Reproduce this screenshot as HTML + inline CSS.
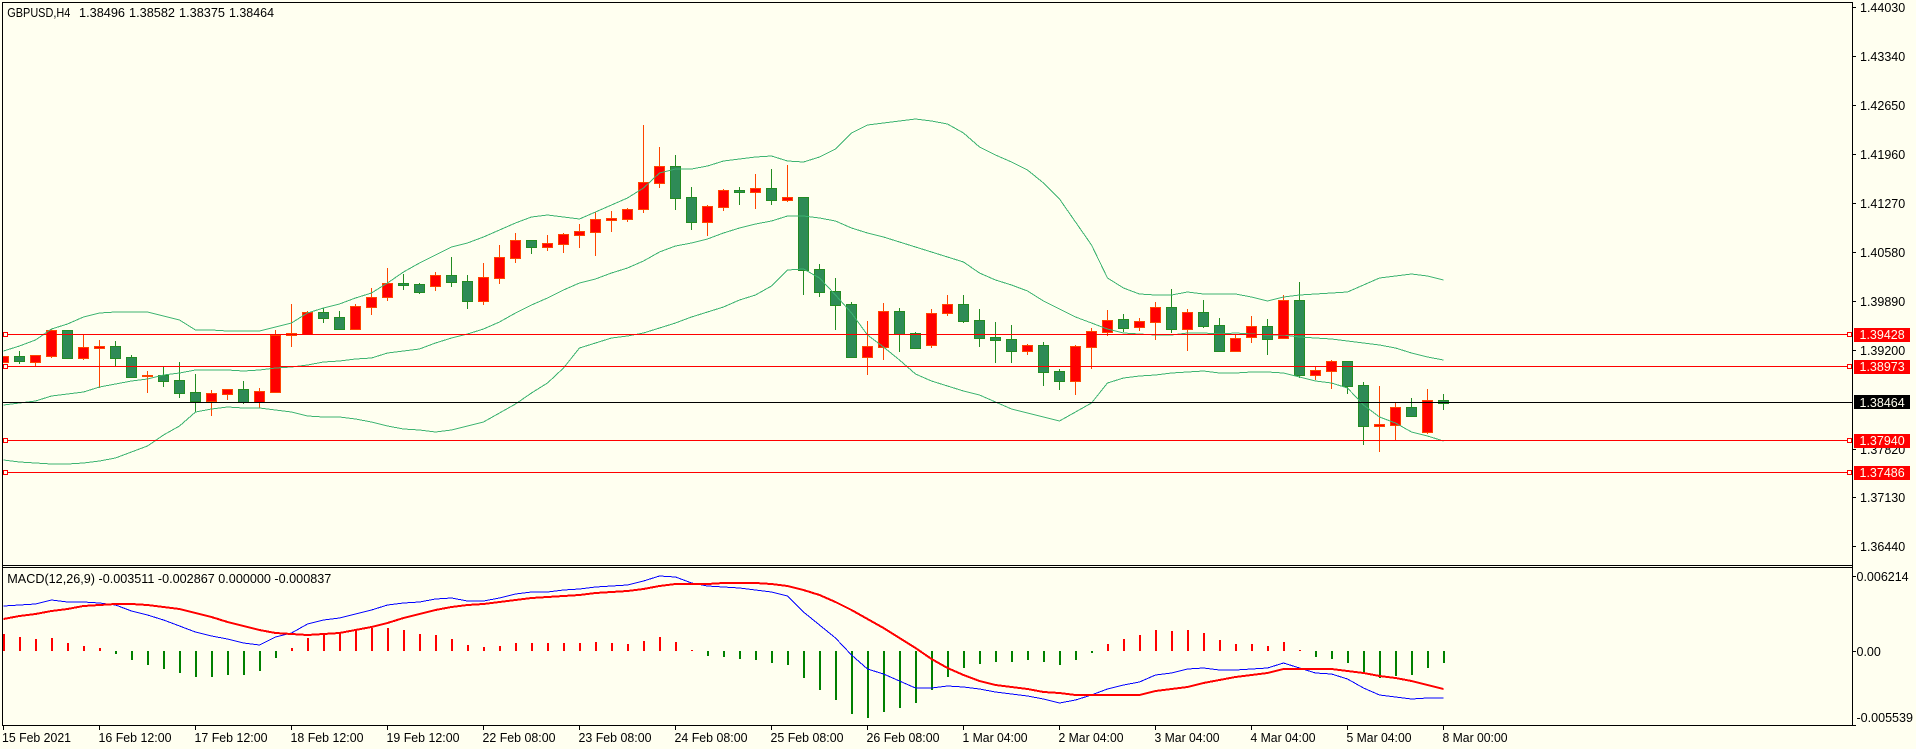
<!DOCTYPE html>
<html><head><meta charset="utf-8"><title>GBPUSD,H4</title>
<style>
html,body{margin:0;padding:0;background:#FFFFF0;width:1916px;height:749px;overflow:hidden}
svg{display:block}
text{font-family:"Liberation Sans",sans-serif;font-size:12.5px;fill:#000}
.c{shape-rendering:crispEdges}
.w{fill:#FFFFF0}
</style></head><body>
<svg width="1916" height="749" viewBox="0 0 1916 749" xmlns="http://www.w3.org/2000/svg">
<rect width="1916" height="749" fill="#FFFFF0"/>
<g class="c" fill="none">
<path stroke="#FF4500" d="M35.5 355V366M51.5 329V358M83.5 334V360M99.5 340V388M147.5 371V393M211.5 390V416M227.5 389V400M259.5 388V408M275.5 330V393M291.5 304V347M307.5 311V334M355.5 304V329M371.5 288V315M387.5 268V301M435.5 272V291M483.5 263V305M499.5 245V284M515.5 233V263M547.5 235V251M563.5 233V253M579.5 224V248M595.5 212V256M611.5 211V232M627.5 208V222M643.5 125V213M659.5 147V188M707.5 205V236M723.5 189V211M755.5 174V209M787.5 165V202M867.5 321V375M883.5 303V360M931.5 309V348M947.5 295V316M1027.5 344V355M1075.5 345V395M1091.5 328V369M1107.5 310V336M1139.5 318V331M1155.5 302V340M1187.5 309V351M1235.5 335V351M1251.5 316V343M1283.5 295V338M1315.5 367V380M1331.5 360V389M1379.5 386V452M1395.5 403V440M1427.5 389V434"/>
<path stroke="#228B22" d="M19.5 351V364M115.5 341V366M131.5 355V377M163.5 367V387M179.5 362V398M195.5 374V412M243.5 381V404M323.5 308V323M339.5 311V329M403.5 274V290M419.5 283V294M451.5 257V287M467.5 275V309M531.5 240V254M675.5 155V210M691.5 187V230M739.5 187V205M771.5 169V205M803.5 197V295M819.5 264V297M835.5 278V330M851.5 302V358M899.5 308V352M915.5 332V349M963.5 295V323M979.5 309V347M995.5 322V363M1011.5 325V363M1043.5 342V386M1059.5 369V390M1123.5 314V332M1171.5 289V333M1203.5 300V328M1219.5 318V351M1267.5 319V355M1299.5 282V378M1347.5 361V394M1363.5 382V445M1411.5 398V417M1443.5 394V410"/>
<path stroke="#FF4500" fill="#FF0000" d="M-1.5 356.5h10v6h-10zM30.5 355.5h10v7h-10zM46.5 330.5h10v26h-10zM78.5 347.5h10v11h-10zM94.5 346.5h10v2h-10zM142.5 375.5h10v1h-10zM206.5 393.5h10v8h-10zM222.5 389.5h10v5h-10zM254.5 391.5h10v11h-10zM270.5 335.5h10v57h-10zM286.5 333.5h10v2h-10zM302.5 312.5h10v22h-10zM350.5 306.5h10v23h-10zM366.5 297.5h10v10h-10zM382.5 283.5h10v14h-10zM430.5 275.5h10v11h-10zM478.5 277.5h10v24h-10zM494.5 257.5h10v21h-10zM510.5 240.5h10v18h-10zM542.5 243.5h10v4h-10zM558.5 234.5h10v10h-10zM574.5 231.5h10v4h-10zM590.5 219.5h10v13h-10zM606.5 218.5h10v2h-10zM622.5 209.5h10v10h-10zM638.5 182.5h10v27h-10zM654.5 166.5h10v17h-10zM702.5 206.5h10v16h-10zM718.5 190.5h10v17h-10zM750.5 188.5h10v4h-10zM782.5 197.5h10v3h-10zM862.5 346.5h10v11h-10zM878.5 311.5h10v36h-10zM926.5 313.5h10v32h-10zM942.5 304.5h10v9h-10zM1022.5 345.5h10v6h-10zM1070.5 346.5h10v35h-10zM1086.5 331.5h10v16h-10zM1102.5 320.5h10v12h-10zM1134.5 321.5h10v6h-10zM1150.5 307.5h10v15h-10zM1182.5 312.5h10v17h-10zM1230.5 338.5h10v13h-10zM1246.5 326.5h10v11h-10zM1278.5 300.5h10v38h-10zM1310.5 370.5h10v5h-10zM1326.5 361.5h10v10h-10zM1374.5 424.5h10v2h-10zM1390.5 407.5h10v18h-10zM1422.5 400.5h10v32h-10z"/>
<path stroke="#228B22" fill="#2E8B57" d="M14.5 356.5h10v5h-10zM62.5 330.5h10v28h-10zM110.5 346.5h10v12h-10zM126.5 357.5h10v20h-10zM158.5 375.5h10v6h-10zM174.5 380.5h10v13h-10zM190.5 392.5h10v9h-10zM238.5 389.5h10v13h-10zM318.5 312.5h10v6h-10zM334.5 317.5h10v12h-10zM398.5 283.5h10v2h-10zM414.5 284.5h10v8h-10zM446.5 275.5h10v7h-10zM462.5 281.5h10v20h-10zM526.5 240.5h10v7h-10zM670.5 166.5h10v32h-10zM686.5 197.5h10v25h-10zM734.5 190.5h10v2h-10zM766.5 188.5h10v12h-10zM798.5 197.5h10v73h-10zM814.5 269.5h10v23h-10zM830.5 291.5h10v14h-10zM846.5 304.5h10v53h-10zM894.5 311.5h10v23h-10zM910.5 333.5h10v15h-10zM958.5 304.5h10v17h-10zM974.5 320.5h10v18h-10zM990.5 337.5h10v3h-10zM1006.5 339.5h10v12h-10zM1038.5 345.5h10v27h-10zM1054.5 371.5h10v10h-10zM1118.5 319.5h10v9h-10zM1166.5 307.5h10v22h-10zM1198.5 312.5h10v14h-10zM1214.5 325.5h10v26h-10zM1262.5 326.5h10v13h-10zM1294.5 300.5h10v75h-10zM1342.5 361.5h10v25h-10zM1358.5 385.5h10v41h-10zM1406.5 407.5h10v9h-10zM1438.5 400.5h10v3h-10z"/>
</g>
<rect x="0" y="0" width="2" height="749" fill="#FFFFF0"/>
<g fill="none" stroke="#3CB371" stroke-width="1" shape-rendering="crispEdges">
<polyline points="3.5,351 19.5,346 35.5,340 51.5,329 67.5,324 83.5,317 99.5,313 115.5,312 131.5,312 147.5,312 163.5,316 179.5,320 195.5,330 211.5,330 227.5,331 243.5,331 259.5,331 275.5,327 291.5,323 307.5,313 323.5,308 339.5,304 355.5,298 371.5,293 387.5,283 403.5,272 419.5,263 435.5,255 451.5,247 467.5,243 483.5,237 499.5,230 515.5,223 531.5,217 547.5,215 563.5,217 579.5,219 595.5,212 611.5,205 627.5,198 643.5,188 659.5,173 675.5,169 691.5,169 707.5,166 723.5,161 739.5,159 755.5,157 771.5,156 787.5,161 803.5,162 819.5,157 835.5,149 851.5,133 867.5,125 883.5,123 899.5,121 915.5,119 931.5,121 947.5,124 963.5,133 979.5,147 995.5,155 1011.5,162 1027.5,170 1043.5,183 1059.5,199 1075.5,222 1091.5,245 1107.5,278 1123.5,288 1139.5,294 1155.5,295 1171.5,295 1187.5,292 1203.5,294 1219.5,294 1235.5,294 1251.5,297 1267.5,301 1283.5,297 1299.5,295 1315.5,294 1331.5,293 1347.5,292 1363.5,285 1379.5,278 1395.5,276 1411.5,274 1427.5,276 1443.5,280"/>
<polyline points="3.5,405 19.5,403 35.5,401 51.5,396 67.5,394 83.5,392 99.5,387 115.5,384 131.5,381 147.5,379 163.5,375 179.5,373 195.5,370 211.5,370 227.5,370 243.5,371 259.5,370 275.5,368 291.5,367 307.5,365 323.5,362 339.5,361 355.5,359 371.5,358 387.5,353 403.5,351 419.5,349 435.5,343 451.5,338 467.5,334 483.5,329 499.5,322 515.5,313 531.5,305 547.5,298 563.5,290 579.5,283 595.5,279 611.5,273 627.5,268 643.5,261 659.5,252 675.5,246 691.5,243 707.5,239 723.5,233 739.5,228 755.5,224 771.5,221 787.5,216 803.5,216 819.5,218 835.5,221 851.5,228 867.5,233 883.5,237 899.5,242 915.5,247 931.5,252 947.5,257 963.5,262 979.5,273 995.5,280 1011.5,285 1027.5,291 1043.5,301 1059.5,309 1075.5,317 1091.5,323 1107.5,329 1123.5,333 1139.5,334 1155.5,335 1171.5,335 1187.5,333 1203.5,333 1219.5,334 1235.5,333 1251.5,334 1267.5,335 1283.5,335 1299.5,337 1315.5,338 1331.5,339 1347.5,341 1363.5,343 1379.5,345 1395.5,348 1411.5,353 1427.5,357 1443.5,360"/>
<polyline points="3.5,460 19.5,462 35.5,463 51.5,464 67.5,464 83.5,463 99.5,461 115.5,458 131.5,452 147.5,446 163.5,435 179.5,426 195.5,412 211.5,409 227.5,407 243.5,408 259.5,408 275.5,410 291.5,412 307.5,416 323.5,417 339.5,417 355.5,419 371.5,422 387.5,426 403.5,429 419.5,430 435.5,432 451.5,430 467.5,426 483.5,422 499.5,413 515.5,404 531.5,393 547.5,383 563.5,368 579.5,348 595.5,343 611.5,338 627.5,336 643.5,333 659.5,328 675.5,323 691.5,317 707.5,312 723.5,307 739.5,300 755.5,295 771.5,286 787.5,270 803.5,269 819.5,278 835.5,295 851.5,313 867.5,335 883.5,347 899.5,360 915.5,374 931.5,381 947.5,386 963.5,391 979.5,395 995.5,402 1011.5,409 1027.5,413 1043.5,417 1059.5,421 1075.5,412 1091.5,403 1107.5,383 1123.5,378 1139.5,376 1155.5,375 1171.5,373 1187.5,372 1203.5,371 1219.5,373 1235.5,373 1251.5,372 1267.5,372 1283.5,373 1299.5,377 1315.5,381 1331.5,383 1347.5,388 1363.5,405 1379.5,417 1395.5,423 1411.5,432 1427.5,436 1443.5,441"/>
</g>
<g class="c">
<g fill="none" stroke="#000"><path d="M3 402.5H1852"/></g>
<path fill="none" stroke="#FF0000" d="M3 334.5H1852M3 366.5H1852M3 440.5H1852M3 472.5H1852"/>
<path fill="#FFFFF0" stroke="#FF0000" d="M3.5 332.5h4v4h-4zM3.5 364.5h4v4h-4zM3.5 438.5h4v4h-4zM3.5 470.5h4v4h-4zM1847.5 332.5h4v4h-4zM1847.5 364.5h4v4h-4zM1847.5 438.5h4v4h-4zM1847.5 470.5h4v4h-4z"/>
<path fill="none" stroke="#000" d="M2.5 2.5H1852.5V725.5H2.5ZM2.5 565.5H1852.5M2.5 567.5H1852.5"/>
<path fill="none" stroke="#000" d="M1853 7.5h3M1853 56.5h3M1853 105.5h3M1853 154.5h3M1853 203.5h3M1853 252.5h3M1853 301.5h3M1853 350.5h3M1853 449.5h3M1853 497.5h3M1853 546.5h3M1853 576.5h3M1853 651.5h3M1853 725.5h3"/>
<path fill="none" stroke="#000" d="M3.5 726V730M99.5 726V730M195.5 726V730M291.5 726V730M387.5 726V730M483.5 726V730M579.5 726V730M675.5 726V730M771.5 726V730M867.5 726V730M963.5 726V730M1059.5 726V730M1155.5 726V730M1251.5 726V730M1347.5 726V730M1443.5 726V730"/>
</g>
<g>
<text x="7.3" y="17" textLength="63" lengthAdjust="spacingAndGlyphs">GBPUSD,H4</text>
<text x="79" y="17" textLength="46" lengthAdjust="spacingAndGlyphs">1.38496</text><text x="129" y="17" textLength="46" lengthAdjust="spacingAndGlyphs">1.38582</text><text x="179" y="17" textLength="46" lengthAdjust="spacingAndGlyphs">1.38375</text><text x="229" y="17" textLength="45" lengthAdjust="spacingAndGlyphs">1.38464</text>
<text x="1860" y="12">1.44030</text><text x="1860" y="61">1.43340</text><text x="1860" y="110">1.42650</text><text x="1860" y="159">1.41960</text><text x="1860" y="208">1.41270</text><text x="1860" y="257">1.40580</text><text x="1860" y="306">1.39890</text><text x="1860" y="355">1.39200</text><text x="1860" y="454">1.37820</text><text x="1860" y="502">1.37130</text><text x="1860" y="551">1.36440</text>
</g>
<g class="c">
<rect x="1854" y="328" width="56" height="14" fill="#FF0000"/>
<rect x="1854" y="360" width="56" height="14" fill="#FF0000"/>
<rect x="1854" y="395" width="56" height="14" fill="#000"/>
<rect x="1854" y="434" width="56" height="14" fill="#FF0000"/>
<rect x="1854" y="466" width="56" height="14" fill="#FF0000"/>
</g>
<text class="w" style="fill:#FFFFF0" x="1859.5" y="339">1.39428</text>
<text class="w" style="fill:#FFFFF0" x="1859.5" y="371">1.38973</text>
<text class="w" style="fill:#FFFFF0" x="1859.5" y="407">1.38464</text>
<text class="w" style="fill:#FFFFF0" x="1859.5" y="445">1.37940</text>
<text class="w" style="fill:#FFFFF0" x="1859.5" y="477">1.37486</text>
<!-- MACD -->
<text x="7.3" y="583" textLength="324" lengthAdjust="spacingAndGlyphs">MACD(12,26,9) -0.003511 -0.002867 0.000000 -0.000837</text>
<g class="c" fill="none" stroke-width="2">
<path stroke="#FF0000" d="M4 651V634M20 651V637M36 651V639M52 651V638M68 651V643M84 651V646M100 651V648M292 651V648M308 651V638M324 651V635M340 651V634M356 651V631M372 651V628M388 651V628M404 651V630M420 651V634M436 651V635M452 651V639M468 651V645M484 651V647M500 651V646M516 651V643M532 651V643M548 651V643M564 651V643M580 651V643M596 651V642M612 651V643M628 651V644M644 651V641M660 651V637M676 651V642M692 651V650M1108 651V644M1124 651V639M1140 651V635M1156 651V630M1172 651V631M1188 651V630M1204 651V633M1220 651V640M1236 651V644M1252 651V644M1268 651V646M1284 651V642M1300 651V650"/>
<path stroke="#008000" d="M116 651V654M132 651V660M148 651V665M164 651V669M180 651V673M196 651V677M212 651V677M228 651V675M244 651V675M260 651V671M276 651V658M708 651V656M724 651V657M740 651V659M756 651V660M772 651V663M788 651V665M804 651V678M820 651V690M836 651V700M852 651V714M868 651V718M884 651V712M900 651V708M916 651V703M932 651V690M948 651V677M964 651V668M980 651V664M996 651V662M1012 651V662M1028 651V660M1044 651V662M1060 651V665M1076 651V660M1092 651V653M1316 651V657M1332 651V659M1348 651V663M1364 651V672M1380 651V678M1396 651V676M1412 651V675M1428 651V668M1444 651V663"/>
</g>
<g fill="none" shape-rendering="crispEdges">
<polyline stroke="#0000FF" stroke-width="1" points="3.5,606 19.5,605 35.5,604 51.5,600 67.5,602 83.5,602 99.5,603 115.5,605 131.5,611 147.5,615 163.5,620 179.5,626 195.5,632 211.5,636 227.5,639 243.5,643 259.5,645 275.5,637 291.5,633 307.5,624 323.5,620 339.5,618 355.5,614 371.5,610 387.5,605 403.5,603 419.5,602 435.5,599 451.5,598 467.5,601 483.5,601 499.5,598 515.5,594 531.5,592 547.5,592 563.5,590 579.5,589 595.5,587 611.5,586 627.5,585 643.5,581 659.5,576 675.5,577 691.5,583 707.5,586 723.5,587 739.5,588 755.5,590 771.5,592 787.5,596 803.5,612 819.5,625 835.5,638 851.5,655 867.5,669 883.5,674 899.5,681 915.5,688 931.5,688 947.5,686 963.5,687 979.5,689 995.5,692 1011.5,694 1027.5,696 1043.5,699 1059.5,703 1075.5,700 1091.5,695 1107.5,689 1123.5,685 1139.5,682 1155.5,675 1171.5,673 1187.5,669 1203.5,668 1219.5,670 1235.5,670 1251.5,669 1267.5,668 1283.5,663 1299.5,668 1315.5,673 1331.5,674 1347.5,679 1363.5,688 1379.5,695 1395.5,697 1411.5,699 1427.5,698 1443.5,698"/>
<polyline stroke="#FF0000" stroke-width="2" points="3.5,619 19.5,616 35.5,614 51.5,611 67.5,609 83.5,606 99.5,605 115.5,604 131.5,604 147.5,605 163.5,607 179.5,609 195.5,613 211.5,617 227.5,622 243.5,626 259.5,630 275.5,633 291.5,634 307.5,635 323.5,634 339.5,633 355.5,630 371.5,627 387.5,623 403.5,618 419.5,614 435.5,610 451.5,607 467.5,605 483.5,604 499.5,602 515.5,600 531.5,598 547.5,597 563.5,596 579.5,595 595.5,593 611.5,592 627.5,591 643.5,589 659.5,586 675.5,584 691.5,584 707.5,584 723.5,583 739.5,583 755.5,583 771.5,584 787.5,586 803.5,590 819.5,595 835.5,602 851.5,610 867.5,619 883.5,628 899.5,638 915.5,648 931.5,659 947.5,668 963.5,675 979.5,681 995.5,685 1011.5,687 1027.5,689 1043.5,692 1059.5,693 1075.5,695 1091.5,695 1107.5,695 1123.5,695 1139.5,695 1155.5,691 1171.5,689 1187.5,687 1203.5,683 1219.5,680 1235.5,677 1251.5,675 1267.5,673 1283.5,669 1299.5,669 1315.5,669 1331.5,669 1347.5,671 1363.5,673 1379.5,676 1395.5,678 1411.5,681 1427.5,685 1443.5,689"/>
</g>
<text x="1856.5" y="581">0.006214</text>
<text x="1856.5" y="656">0.00</text>
<text x="1856.5" y="722" textLength="56.5" lengthAdjust="spacingAndGlyphs">-0.005539</text>
<!-- time axis -->
<g>
<text x="2" y="742" textLength="69" lengthAdjust="spacingAndGlyphs">15 Feb 2021</text><text x="98.5" y="742" textLength="73" lengthAdjust="spacingAndGlyphs">16 Feb 12:00</text><text x="194.5" y="742" textLength="73" lengthAdjust="spacingAndGlyphs">17 Feb 12:00</text><text x="290.5" y="742" textLength="73" lengthAdjust="spacingAndGlyphs">18 Feb 12:00</text><text x="386.5" y="742" textLength="73" lengthAdjust="spacingAndGlyphs">19 Feb 12:00</text><text x="482.5" y="742" textLength="73" lengthAdjust="spacingAndGlyphs">22 Feb 08:00</text><text x="578.5" y="742" textLength="73" lengthAdjust="spacingAndGlyphs">23 Feb 08:00</text><text x="674.5" y="742" textLength="73" lengthAdjust="spacingAndGlyphs">24 Feb 08:00</text><text x="770.5" y="742" textLength="73" lengthAdjust="spacingAndGlyphs">25 Feb 08:00</text><text x="866.5" y="742" textLength="73" lengthAdjust="spacingAndGlyphs">26 Feb 08:00</text><text x="962.5" y="742" textLength="65" lengthAdjust="spacingAndGlyphs">1 Mar 04:00</text><text x="1058.5" y="742" textLength="65" lengthAdjust="spacingAndGlyphs">2 Mar 04:00</text><text x="1154.5" y="742" textLength="65" lengthAdjust="spacingAndGlyphs">3 Mar 04:00</text><text x="1250.5" y="742" textLength="65" lengthAdjust="spacingAndGlyphs">4 Mar 04:00</text><text x="1346.5" y="742" textLength="65" lengthAdjust="spacingAndGlyphs">5 Mar 04:00</text><text x="1442.5" y="742" textLength="65" lengthAdjust="spacingAndGlyphs">8 Mar 00:00</text>
</g>
</svg>
</body></html>
